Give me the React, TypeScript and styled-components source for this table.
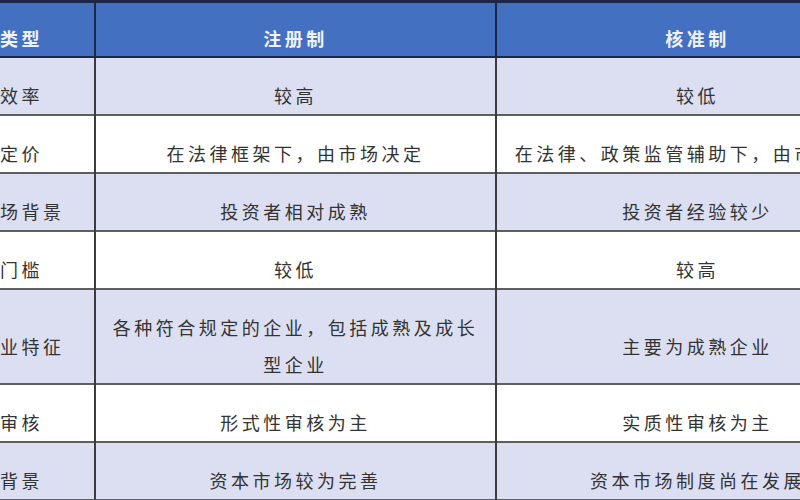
import styled, { createGlobalStyle } from "styled-components";

const GlobalStyle = createGlobalStyle`
  html, body {
    margin: 0;
    padding: 0;
    background: #ffffff;
    overflow: hidden;
  }
  body {
    font-family: "Noto Sans CJK SC", "Noto Sans", sans-serif;
  }
`;

const Viewport = styled.div`
  width: 800px;
  height: 500px;
  overflow: hidden;
  background: #dcdff2;
`;

const Table = styled.table`
  border-collapse: collapse;
  table-layout: fixed;
  width: 949px;
  margin-left: -51px;
  color: #333333;
  font-size: 18px;
  letter-spacing: 3.5px;
`;

const HeadRow = styled.tr`
  background: #4470c2;
  border-top: 3px solid #1d2748;
  border-bottom: 2px solid #1d2748;
`;

const HeadCell = styled.th`
  padding: 18px 10px 0;
  line-height: 35px;
  font-weight: 700;
  color: #eef2fa;
  text-align: center;
  border-left: 2px solid #1d2748;
  &:first-child {
    border-left: none;
  }
`;

const Row = styled.tr<{ $shade: boolean }>`
  background: ${({ $shade }) => ($shade ? "#dcdff2" : "#ffffff")};
  border-bottom: 2px solid #5e5e5e;
`;

const Cell = styled.td`
  padding: 19px 10px 0;
  line-height: 37px;
  text-align: center;
  vertical-align: middle;
  border-left: 2px solid #3c3c3c;
  word-break: break-all;
  &:first-child {
    border-left: none;
  }
`;

const rows = [
  ["效率", "较高", "较低"],
  ["定价", "在法律框架下，由市场决定", "在法律、政策监管辅助下，由市场决定"],
  ["市场背景", "投资者相对成熟", "投资者经验较少"],
  ["门槛", "较低", "较高"],
  ["企业特征", "各种符合规定的企业，包括成熟及成长型企业", "主要为成熟企业"],
  ["审核", "形式性审核为主", "实质性审核为主"],
  ["背景", "资本市场较为完善", "资本市场制度尚在发展"],
];

const App = () => {
  return (
    <Viewport>
      <GlobalStyle />
      <Table>
        <colgroup>
          <col style={{ width: 146 }} />
          <col style={{ width: 401 }} />
          <col style={{ width: 402 }} />
        </colgroup>
        <thead>
          <HeadRow>
            <HeadCell>类型</HeadCell>
            <HeadCell>注册制</HeadCell>
            <HeadCell>核准制</HeadCell>
          </HeadRow>
        </thead>
        <tbody>
          {rows.map((row, i) => (
            <Row key={row[0] + i} $shade={i % 2 === 0}>
              {row.map((text, j) => (
                <Cell key={j}>{text}</Cell>
              ))}
            </Row>
          ))}
        </tbody>
      </Table>
    </Viewport>
  );
};

export default App;
